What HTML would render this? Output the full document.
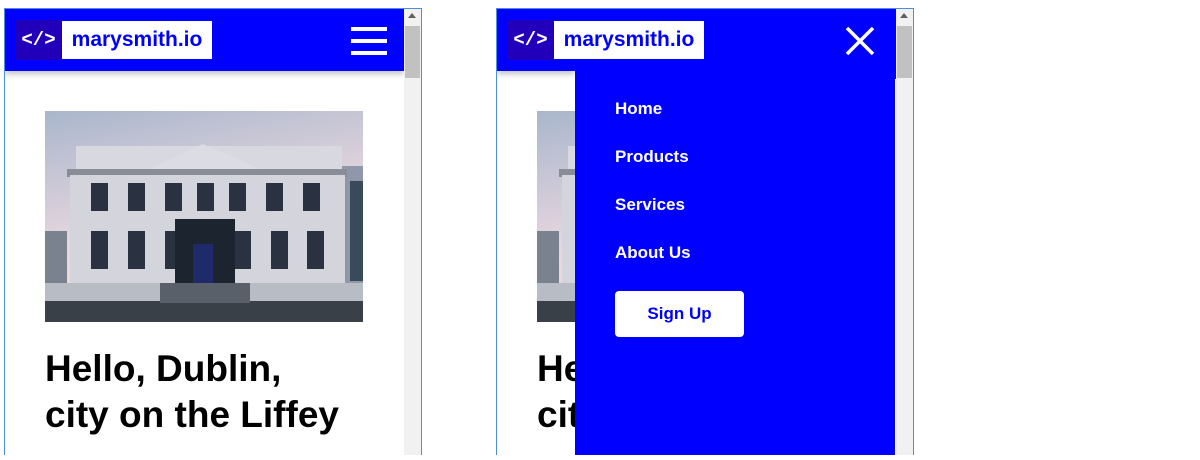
<!DOCTYPE html>
<html><head><style>
body{margin:0;width:1200px;height:460px;background:#fff;position:relative;overflow:hidden;font-family:"Liberation Sans",sans-serif}
.frame{position:absolute;top:8px;width:416px;height:446px;border:1px solid #4a90e2;border-bottom:none;overflow:hidden;background:#fff}
.sb{position:absolute;right:0;top:0;width:17px;height:100%;background:#f1f1f1}
.sb .th{position:absolute;left:1px;top:17px;width:15px;height:52px;background:#c1c1c1}
.sb .ar{position:absolute;left:4px;top:4px;width:0;height:0;border-left:4px solid transparent;border-right:4px solid transparent;border-bottom:5px solid #606060}
.hdr{position:absolute;left:0;top:0;width:399px;height:62px;background:#0000ff}
.shadow{box-shadow:0 3px 6px rgba(0,0,0,.25)}
.logo{position:absolute;left:10px;top:11px;height:40px;display:flex}
.lg1{width:47px;height:40px;background:#2200bb;color:#fff;font:bold 19px "Liberation Mono",monospace;display:flex;align-items:center;justify-content:center}
.lg2{width:150px;height:38px;margin-top:1px;background:#fff;color:#0000ff;font:bold 21px "Liberation Sans",sans-serif;display:flex;align-items:center;justify-content:center}
.img{position:absolute;left:40px;top:102px;width:318px;height:212px}
h1{position:absolute;left:40px;top:337px;margin:0;font:bold 37px/46px "Liberation Sans",sans-serif;color:#000;white-space:nowrap}
.menu{position:absolute;left:78px;top:62px;width:320px;height:400px;background:#0000ff}
.menu a{position:absolute;left:40px;color:#fff;font:bold 17px "Liberation Sans",sans-serif;text-decoration:none}
.btn{position:absolute;left:40px;top:220px;width:129px;height:46px;background:#fff;border-radius:4px;color:#0000ff;font:bold 17px "Liberation Sans",sans-serif;display:flex;align-items:center;justify-content:center}
</style></head><body>

<svg width="0" height="0" style="position:absolute">
<defs>
<linearGradient id="sky" x1="0" y1="0" x2="0.3" y2="1"><stop offset="0" stop-color="#a9b6cc"/><stop offset=".6" stop-color="#e6d6de"/><stop offset="1" stop-color="#f0dcd8"/></linearGradient>
<g id="bld">
<rect width="318" height="211" fill="url(#sky)"/>
<rect x="0" y="120" width="22" height="60" fill="#7a8290"/>
<rect x="293" y="55" width="25" height="130" fill="#8e98a8"/>
<rect x="305" y="70" width="13" height="100" fill="#3a4a5a"/>
<rect x="31" y="35" width="266" height="25" fill="#d8d8e0"/>
<polygon points="105,58 158,33 215,58" fill="#dcdce4"/>
<rect x="22" y="58" width="280" height="8" fill="#8a8c98"/>
<rect x="25" y="64" width="275" height="112" fill="#d4d4dc"/>
<g fill="#2a3242">
<rect x="46" y="72" width="17" height="28"/><rect x="83" y="72" width="17" height="28"/><rect x="120" y="72" width="17" height="28"/><rect x="152" y="72" width="17" height="28"/><rect x="184" y="72" width="17" height="28"/><rect x="221" y="72" width="17" height="28"/><rect x="258" y="72" width="17" height="28"/>
<rect x="46" y="120" width="17" height="38"/><rect x="83" y="120" width="17" height="38"/><rect x="120" y="120" width="17" height="38"/><rect x="189" y="120" width="17" height="38"/><rect x="226" y="120" width="17" height="38"/><rect x="262" y="120" width="17" height="38"/>
</g>
<rect x="130" y="108" width="60" height="80" fill="#1c2430"/>
<rect x="148" y="133" width="20" height="40" fill="#1e2a6a"/>
<rect x="0" y="172" width="318" height="20" fill="#b8bcc4"/>
<rect x="0" y="190" width="318" height="21" fill="#3a4048"/>
<rect x="115" y="172" width="90" height="20" fill="#5a606a"/>
</g>
</defs>
</svg>

<div class="frame" style="left:4px">
  <svg class="img" viewBox="0 0 318 212"><use href="#bld"/></svg>
  <h1>Hello, Dublin,<br>city on the Liffey</h1>
  <div class="hdr shadow">
    <div class="logo"><div class="lg1">&lt;/&gt;</div><div class="lg2">marysmith.io</div></div>
    <div style="position:absolute;left:346px;top:18px;width:36px;height:4px;background:#fff"></div>
    <div style="position:absolute;left:346px;top:30px;width:36px;height:4px;background:#fff"></div>
    <div style="position:absolute;left:346px;top:42px;width:36px;height:4px;background:#fff"></div>
  </div>
  <div class="sb"><div class="ar"></div><div class="th"></div></div>
</div>

<div class="frame" style="left:496px">
  <svg class="img" viewBox="0 0 318 212"><use href="#bld"/></svg>
  <h1>Hello, Dublin,<br>city on the Liffey</h1>
  <div class="hdr" style="height:62px"></div>
  <div class="hdr shadow" style="width:78px;height:62px"></div>
  <div class="hdr" style="left:78px;width:321px;height:70px"></div>
  <div class="logo"><div class="lg1">&lt;/&gt;</div><div class="lg2">marysmith.io</div></div>
  <svg style="position:absolute;left:347px;top:16px" width="32" height="32" viewBox="0 0 32 32"><path d="M3 3L29 29M29 3L3 29" stroke="#fff" stroke-width="3.5"/></svg>
  <div class="menu">
    <a style="top:28px">Home</a>
    <a style="top:76px">Products</a>
    <a style="top:124px">Services</a>
    <a style="top:172px">About Us</a>
    <div class="btn">Sign Up</div>
  </div>
  <div class="sb"><div class="ar"></div><div class="th"></div></div>
</div>
</body></html>
